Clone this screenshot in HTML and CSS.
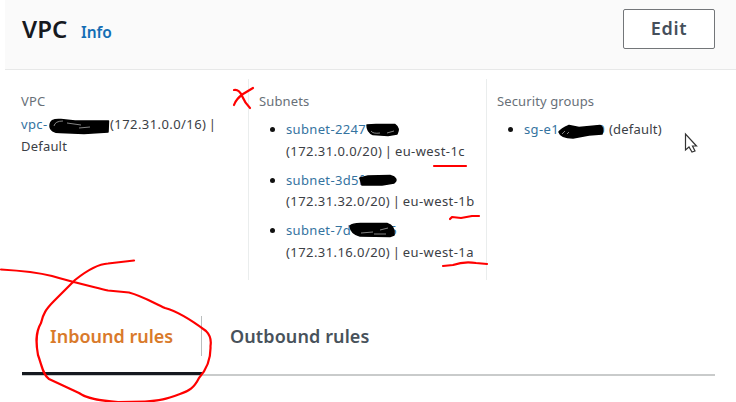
FILE: index.html
```html
<!DOCTYPE html>
<html lang="en">
<head>
<meta charset="utf-8">
<title>VPC</title>
<link rel="stylesheet" href="styles.css">
</head>
<body>
<main class="page">
  <header class="header">
    <h1 class="title">VPC</h1>
    <a class="info">Info</a>
    <button class="edit">Edit</button>
  </header>
  <section class="details">
    <div class="column">
      <h2 class="label">VPC</h2>
      <p class="value"><a class="link vpc-id">vpc-</a><span class="cidr">(172.31.0.0/16) |</span><br><span class="default">Default</span></p>
    </div>
    <div class="column">
      <h2 class="label">Subnets</h2>
      <ul class="list">
        <li><a class="link">subnet-2247</a><br><span class="zone">(172.31.0.0/20) | eu-west-1c</span></li>
        <li><a class="link">subnet-3d5f</a><br><span class="zone">(172.31.32.0/20) | eu-west-1b</span></li>
        <li><a class="link subnet-a"><span>subnet-7d</span><span>5</span></a><br><span class="zone">(172.31.16.0/20) | eu-west-1a</span></li>
      </ul>
    </div>
    <div class="column">
      <h2 class="label">Security groups</h2>
      <ul class="list">
        <li><a class="link group-id"><span>sg-e1</span><span>0</span></a><span class="group-name">(default)</span></li>
      </ul>
    </div>
  </section>
  <nav class="tabs">
    <a class="tab active"><span>Inbound rules</span></a>
    <a class="tab"><span>Outbound rules</span></a>
  </nav>
</main>
<svg class="annotations" width="736" height="402" viewBox="0 0 736 402">
  <g class="redactions">
    <path d="M50 126 C50 120 54 119 61 119.500 L75 121 L108.500 121 L108 132 L84 133.500 L60 132.500 C54 132.500 50 130 50 126Z"/>
    <path d="M367 125 L376 124.500 L395 124.500 Q400 128 397 134 L388 135.500 L373 134.500 Q367 132 367 125Z"/>
    <path d="M360 178 L368 176 L390 175.500 L394 177 Q398 180 394 183 L382 185 L362 185Z"/>
    <path d="M350 226 Q353 223 363 223.500 L387 223.500 Q395 226 394 235 L390 236.500 L360 236 Q351 234 350 226Z"/>
    <path d="M559 132 Q561 129 569 125.500 L579 127.500 L600 125.500 Q604 127 602 134 L589 135 L573 138 Q561 138 559 132Z"/>
  </g>
  <g class="glints">
    <path d="M54 126 Q55 121 63 121M67 123 L81 125M79 128 L90 127"/>
    <path d="M371 131 Q373 134 380 133M387 133 L394 131"/>
    <path d="M361 233 L373 232M380 230 L388 228M374 234 L386 234"/>
    <path d="M562 134 L565 131M567 134 L569 132"/>
  </g>
  <g class="marks">
    <path d="M234 90 Q239 89 242 96 T250 108M253 88 L243 94 Q236 99 234 105"/>
    <path d="M434 166 L466 166"/>
    <path d="M450 219 L452 217 L461 218 L472 216 L479 216"/>
    <path d="M443 266 L453 265 Q464 261 476 263 L487 264"/>
    <path d="M1 269.500 C18 270.500 38 272.500 52 276 C72 282 90 286 108 290.500 L129 292.500 C142 296 152 302 165 308 C180 312 194 322 206 331 Q212 337 210.500 346 C211 359 207 369 199 378 C194 388 189 391 180 394 C166 399 160 401 145 401.500 L118 402 C101 401 86 398 79 393 L49 379 C43 375 42 366 38 355 C36 344 35 333 41 323 C43 314 46 309 54 301 L75 280 C85 272 98 264 108 263.500 L134 260.500"/>
  </g>
  <path class="cursor" d="M685.500 134 V150 L689 147 L692 152 L695 151 L692.500 146 H696.500 Z"/>
</svg>
</body>
</html>
```
FILE: styles.css
```css
* { box-sizing: border-box; }
body {
  margin: 0;
  background: #fff;
  color: #3b4045;
  font-family: "Noto Sans", "Open Sans", sans-serif;
  font-size: 13px;
  overflow: hidden;
}
.page { height: 402px; padding-left: 5px; }
.header {
  display: flex;
  height: 70px;
  padding: 9px 21px 0 17px;
  background: #fafafa;
  border-bottom: 1px solid #e7e8e8;
}
.title { margin: 5px 0 0; width: 59px; font-size: 24px; line-height: 30px; font-weight: 600; color: #16191f; }
.info { margin-top: 11px; font-size: 15.500px; line-height: 24px; font-weight: 600; color: #146eb4; }
.edit {
  margin-left: auto;
  width: 92px;
  height: 40px;
  padding: 0 0 2px;
  background: #fff;
  border: 1px solid #737679;
  border-radius: 2px;
  color: #454f5b;
  font: 600 18px "Noto Sans", sans-serif;
  letter-spacing: .7px;
}
.details {
  display: grid;
  grid-template-columns: 238px 238px 238px;
  height: 201px;
  margin: 9px 0 0 5px;
}
.column { padding: 12px 0 0 11px; white-space: nowrap; }
.column + .column { padding-left: 10px; border-left: 1px solid #eaeded; }
.label { margin: 0; font-size: 13px; line-height: 20px; font-weight: 400; letter-spacing: .12px; color: #687078; }
.value { margin: 3px 0 0; line-height: 21.500px; }
.link { color: #34739f; letter-spacing: .35px; }
.cidr, .zone { letter-spacing: .42px; word-spacing: -1.300px; }
.default, .group-name { letter-spacing: .2px; }
.vpc-id { display: inline-block; width: 89px; }
.list { margin: 8px 0 0; padding: 0 0 0 27px; line-height: 21.500px; }
.list li { margin-bottom: 7.500px; }
.list li::marker { color: #111; }
.subnet-a { display: inline-flex; justify-content: space-between; width: 111px; }
.group-id { display: inline-flex; justify-content: space-between; width: 81px; margin-right: 4px; }
.tabs {
  display: flex;
  height: 60px;
  width: 693px;
  margin: 36px 0 0 17px;
  border-bottom: 2px solid #c9cbcb;
}
.tab {
  position: relative;
  height: 59px;
  padding: 7px 28px 0;
  font-size: 18px;
  line-height: 26px;
  font-weight: 600;
  letter-spacing: .1px;
  color: #48525b;
  white-space: nowrap;
}
.active { width: 180px; color: #d97a2b; border-bottom: 3px solid #16191f; letter-spacing: 0; }
.active::after { content: ""; position: absolute; right: 0; top: 0; width: 1px; height: 40px; background: #babebe; }
.annotations { position: absolute; inset: 0; pointer-events: none; }
.redactions path { fill: #000; stroke: #000; stroke-width: 1.500; stroke-linejoin: round; }
.glints path { fill: none; stroke: #bbb; stroke-width: .7; }
.marks path { fill: none; stroke: #f00; stroke-width: 2.200; stroke-linecap: round; stroke-linejoin: round; }
.cursor { fill: #fff; stroke: #333; stroke-width: 1.200; }
```
